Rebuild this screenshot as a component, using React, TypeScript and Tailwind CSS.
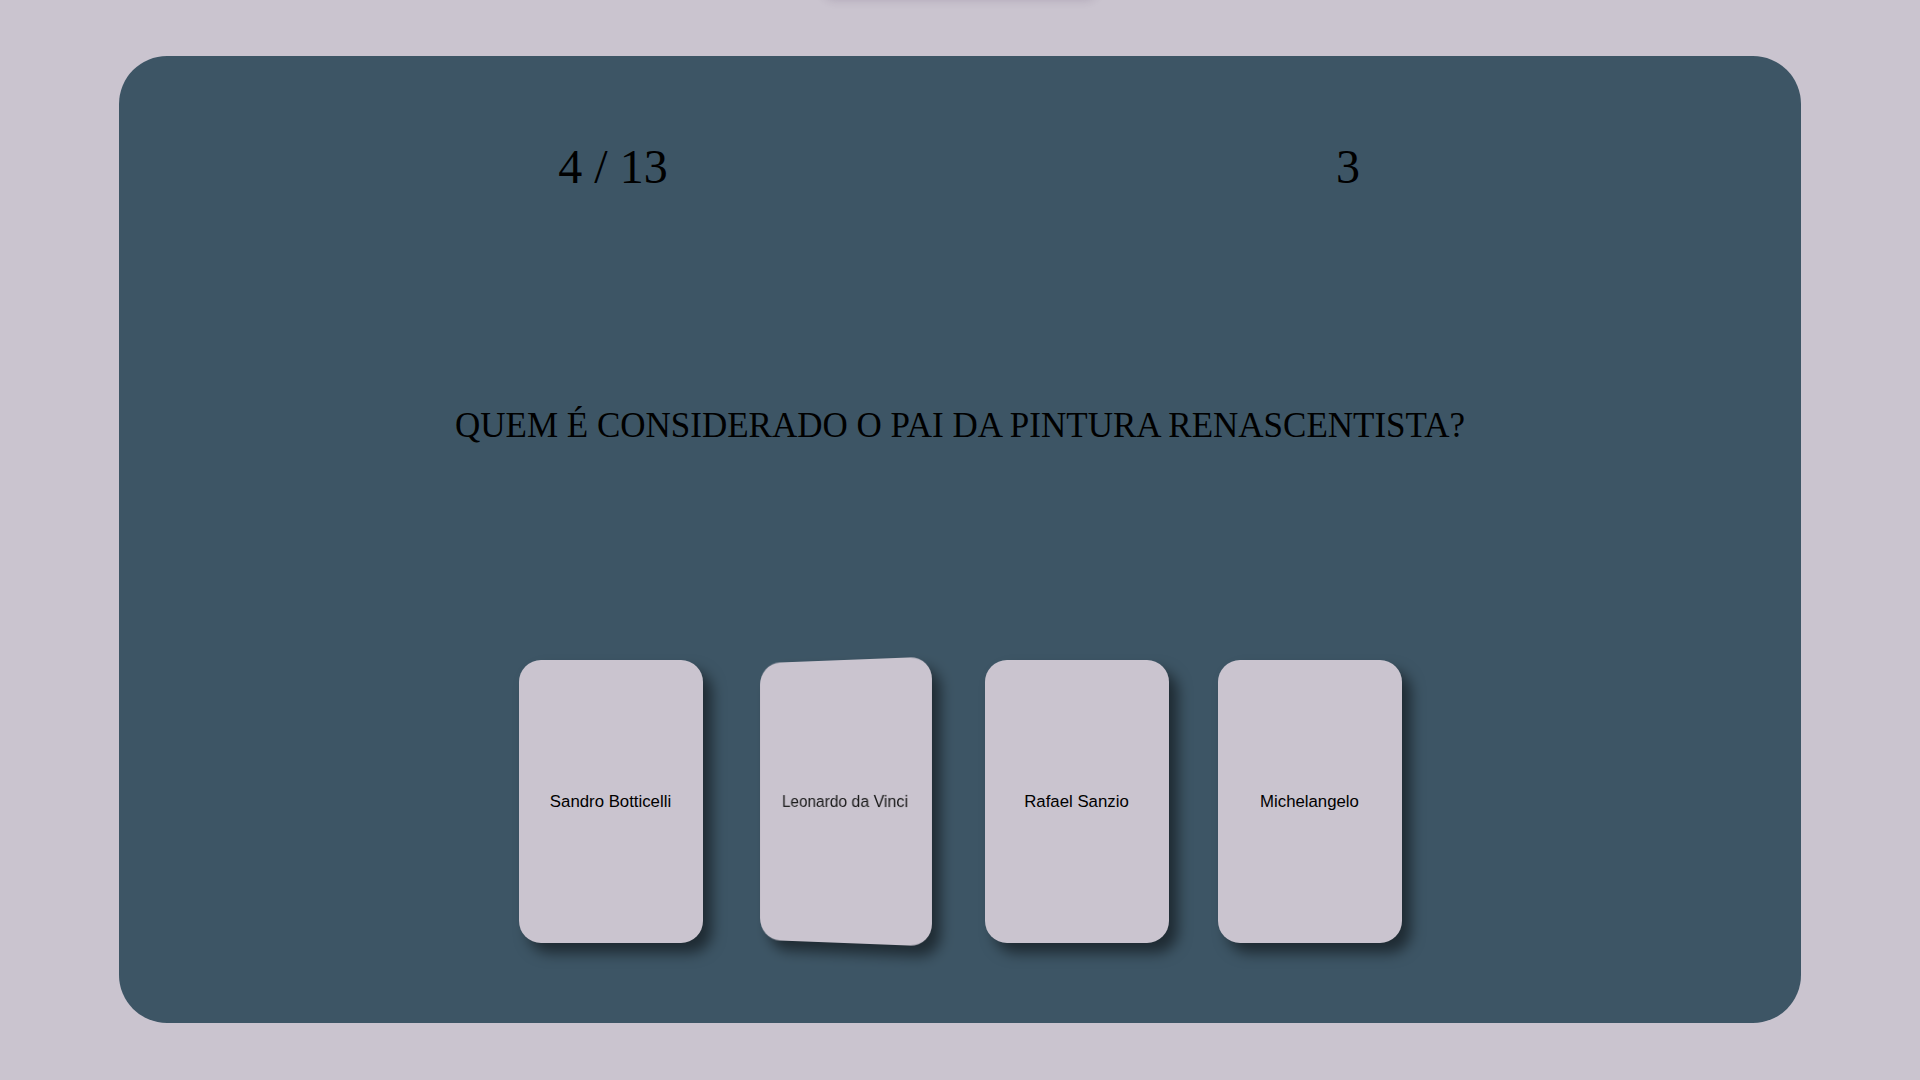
import React from "react";

const answers = ["Sandro Botticelli", "Leonardo da Vinci", "Rafael Sanzio", "Michelangelo"];

export default function App() {
  return (
    <div className="relative min-h-screen w-full overflow-hidden bg-[#cac4cf] pt-[56px]">
      <div className="absolute left-[823px] top-[-40px] h-[40px] w-[274px] rounded-b-[12px] bg-[#cac4cf] shadow-[0_0_10px_rgba(60,40,80,0.18)]" />
      <div className="mx-auto flex h-[967px] w-[1682px] flex-col rounded-[48px] bg-[#3d5565] pt-[84px]">
        <div className="flex h-[53px] items-center pl-[344px] font-['Liberation_Serif',serif] text-[48px] leading-[53px] text-black">
          <div className="w-[300px] text-center">4 / 13</div>
          <div className="ml-[435px] w-[300px] text-center">3</div>
        </div>
        <div className="mt-[213px] text-center font-['Liberation_Serif',serif] text-[35px] leading-[40px] text-black">
          QUEM É CONSIDERADO O PAI DA PINTURA RENASCENTISTA?
        </div>
        <div className="mt-[214px] flex justify-center gap-[49px]">
          {answers.map((a, i) => (
            <div
              key={a}
              className={
                i === 1
                  ? "flex h-[283px] w-[184px] items-center justify-center rounded-[22px] bg-[#cac4cf] font-['Liberation_Sans',Arial,sans-serif] text-[16.8px] text-[#1a1a1a] shadow-[9px_10px_14px_rgba(0,0,0,0.5)] [transform:perspective(1400px)_rotateY(-21deg)]"
                  : "flex h-[283px] w-[184px] items-center justify-center rounded-[22px] bg-[#cac4cf] font-['Liberation_Sans',Arial,sans-serif] text-[16.8px] text-black shadow-[9px_10px_14px_rgba(0,0,0,0.5)]"
              }
            >
              {a}
            </div>
          ))}
        </div>
      </div>
    </div>
  );
}
